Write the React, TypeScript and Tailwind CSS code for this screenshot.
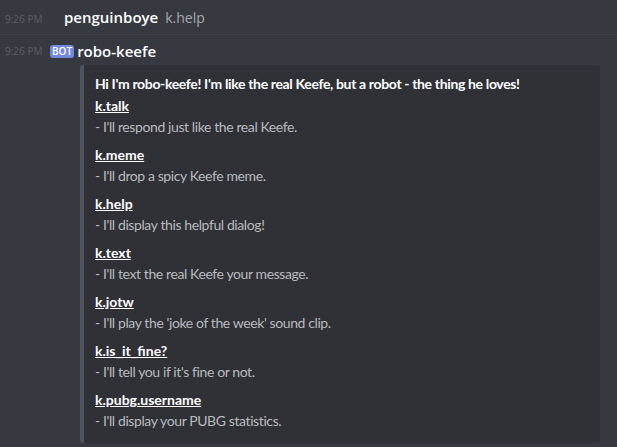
const fields = [
  { name: "k.talk", value: "- I'll respond just like the real Keefe." },
  { name: "k.meme", value: "- I'll drop a spicy Keefe meme." },
  { name: "k.help", value: "- I'll display this helpful dialog!" },
  { name: "k.text", value: "- I'll text the real Keefe your message." },
  { name: "k.jotw", value: "- I'll play the 'joke of the week' sound clip." },
  { name: "k.is_it_fine?", value: "- I'll tell you if it's fine or not." },
  { name: "k.pubg.username", value: "- I'll display your PUBG statistics." },
];

export default function App() {
  return (
    <div className="w-[617px] h-[447px] overflow-hidden bg-[#36393f] font-['Lato',sans-serif]">
      {/* user message */}
      <div className="flex items-baseline h-[34px] pt-[6px] pl-[5px] font-['Open_Sans',sans-serif]">
        <span className="w-[59px] text-[10px] text-[#5d6066]">9:26 PM</span>
        <span className="text-[15px] font-semibold text-white">penguinboye</span>
        <span className="ml-[7px] text-[14px] text-[#a3a9a8]">k.help</span>
      </div>
      <div className="h-px bg-[#3f4247]" />

      {/* bot message */}
      <div className="flex items-center h-[30px] pt-[2px] pl-[5px] font-['Open_Sans',sans-serif]">
        <span className="w-[45px] text-[10px] text-[#5d6066]">9:26 PM</span>
        <span className="bg-[#7289da] text-white text-[10px] font-semibold leading-[13px] px-[2px] rounded-[3px]">
          BOT
        </span>
        <span className="ml-[3px] text-[15px] font-semibold text-white">robo-keefe</span>
      </div>

      <div className="ml-[80px] w-[520px] flex border-l-4 border-[#4f545c] bg-[#2f3136] rounded-[3px]">
        <div className="pl-[11px] pt-[9px] pb-[6px] flex flex-col">
          <div className="text-[14px] font-bold text-white leading-[20px] tracking-[-0.35px]">
            Hi I'm robo-keefe! I'm like the real Keefe, but a robot - the thing he loves!
          </div>
          {fields.map((f) => (
            <div key={f.name} className="mt-[2px] mb-[5px]">
              <div className="text-[14px] font-bold text-white underline leading-[20px]">{f.name}</div>
              <div className="text-[14px] text-[#b9bbbe] leading-[22px] tracking-[-0.4px]">{f.value}</div>
            </div>
          ))}
        </div>
      </div>
    </div>
  );
}
